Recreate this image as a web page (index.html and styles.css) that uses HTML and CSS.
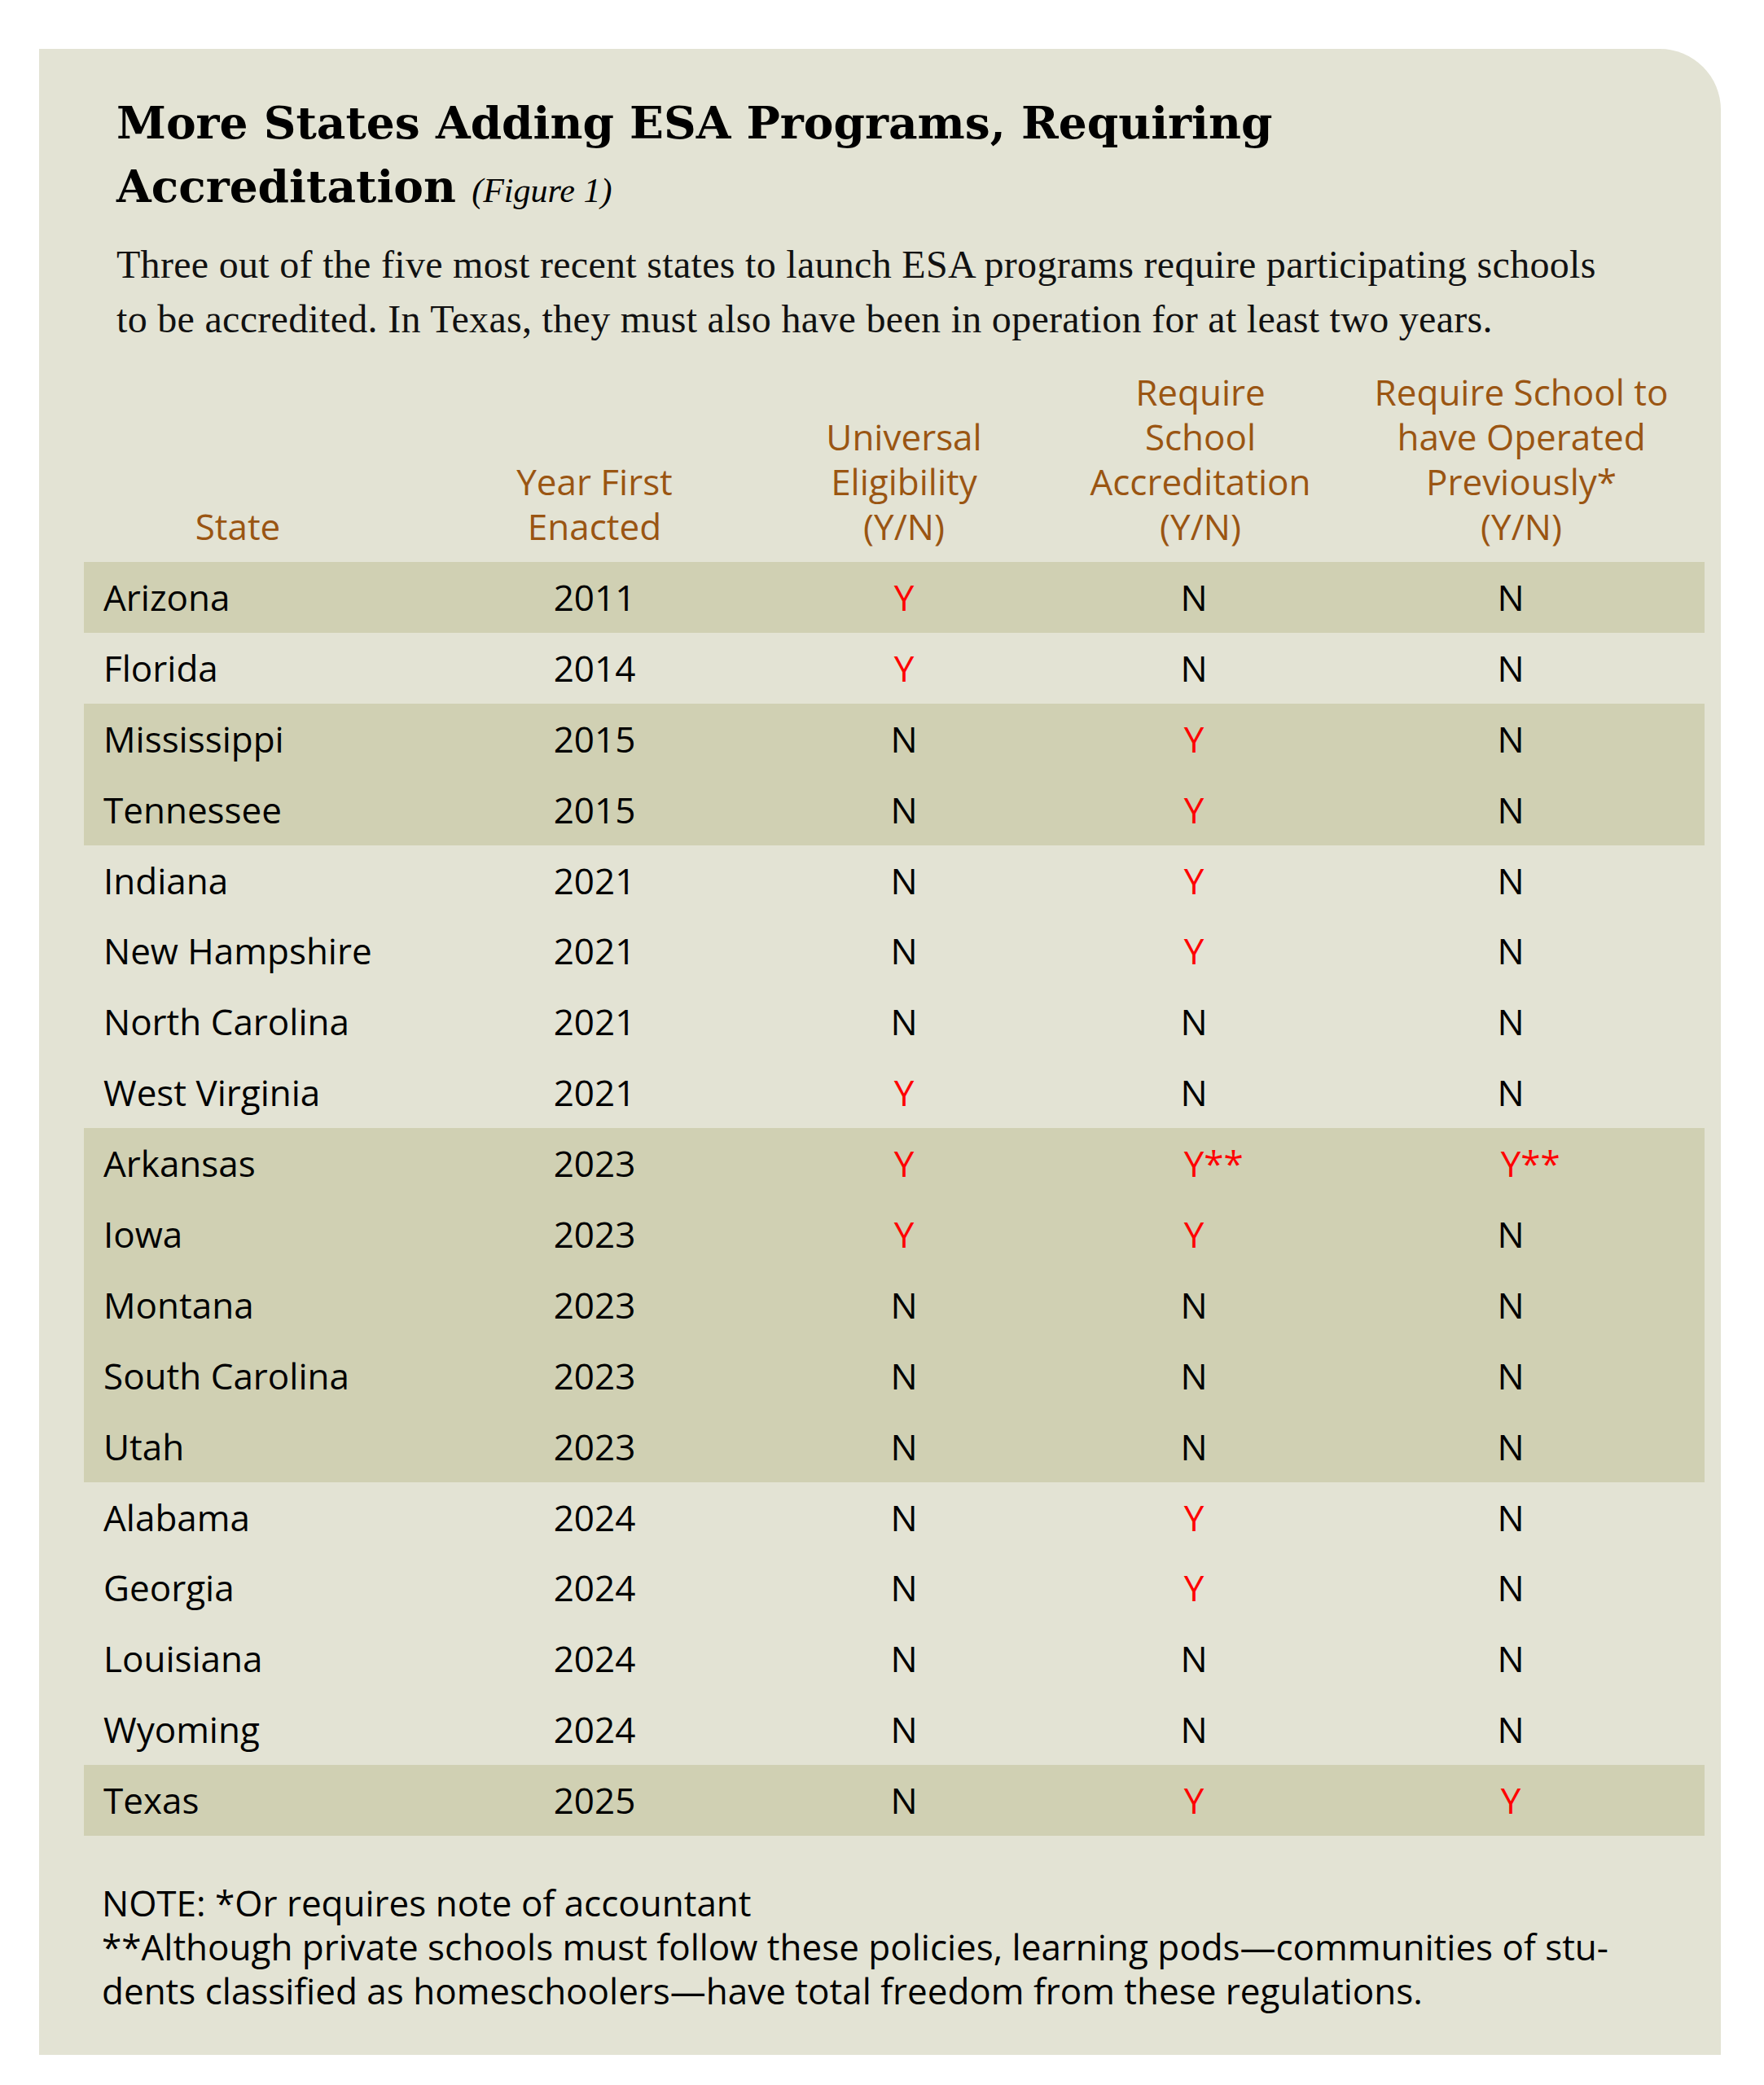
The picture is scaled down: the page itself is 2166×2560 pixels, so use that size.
FILE: index.html
```html
<!DOCTYPE html>
<html lang="en">
<head>
<meta charset="utf-8">
<title>More States Adding ESA Programs, Requiring Accreditation</title>
<link rel="stylesheet" href="styles.css">
</head>
<body>
<section class="panel">
  <h1 class="title">More States Adding ESA Programs, Requiring<br>Accreditation <span class="fig">(Figure 1)</span></h1>
  <p class="lede">Three out of the five most recent states to launch ESA programs require participating schools<br>to be accredited. In Texas, they must also have been in operation for at least two years.</p>

  <div class="table">
    <div class="head">
      <div class="hc c1"><span>State</span></div>
      <div class="hc c2"><span>Year First<br>Enacted</span></div>
      <div class="hc c3"><span>Universal<br>Eligibility<br>(Y/N)</span></div>
      <div class="hc c4"><span>Require<br>School<br>Accreditation<br>(Y/N)</span></div>
      <div class="hc c5"><span>Require School to<br>have Operated<br>Previously*<br>(Y/N)</span></div>
    </div>

    <div class="row shade"><div class="st">Arizona</div><div class="yr">2011</div><div class="v y">Y</div><div class="v">N</div><div class="v">N</div></div>
    <div class="row"><div class="st">Florida</div><div class="yr">2014</div><div class="v y">Y</div><div class="v">N</div><div class="v">N</div></div>
    <div class="row shade"><div class="st">Mississippi</div><div class="yr">2015</div><div class="v">N</div><div class="v y">Y</div><div class="v">N</div></div>
    <div class="row shade"><div class="st">Tennessee</div><div class="yr">2015</div><div class="v">N</div><div class="v y">Y</div><div class="v">N</div></div>
    <div class="row"><div class="st">Indiana</div><div class="yr">2021</div><div class="v">N</div><div class="v y">Y</div><div class="v">N</div></div>
    <div class="row"><div class="st">New Hampshire</div><div class="yr">2021</div><div class="v">N</div><div class="v y">Y</div><div class="v">N</div></div>
    <div class="row"><div class="st">North Carolina</div><div class="yr">2021</div><div class="v">N</div><div class="v">N</div><div class="v">N</div></div>
    <div class="row"><div class="st">West Virginia</div><div class="yr">2021</div><div class="v y">Y</div><div class="v">N</div><div class="v">N</div></div>
    <div class="row shade"><div class="st">Arkansas</div><div class="yr">2023</div><div class="v y">Y</div><div class="v y">Y<span class="hang">**</span></div><div class="v y">Y<span class="hang">**</span></div></div>
    <div class="row shade"><div class="st">Iowa</div><div class="yr">2023</div><div class="v y">Y</div><div class="v y">Y</div><div class="v">N</div></div>
    <div class="row shade"><div class="st">Montana</div><div class="yr">2023</div><div class="v">N</div><div class="v">N</div><div class="v">N</div></div>
    <div class="row shade"><div class="st">South Carolina</div><div class="yr">2023</div><div class="v">N</div><div class="v">N</div><div class="v">N</div></div>
    <div class="row shade"><div class="st">Utah</div><div class="yr">2023</div><div class="v">N</div><div class="v">N</div><div class="v">N</div></div>
    <div class="row"><div class="st">Alabama</div><div class="yr">2024</div><div class="v">N</div><div class="v y">Y</div><div class="v">N</div></div>
    <div class="row"><div class="st">Georgia</div><div class="yr">2024</div><div class="v">N</div><div class="v y">Y</div><div class="v">N</div></div>
    <div class="row"><div class="st">Louisiana</div><div class="yr">2024</div><div class="v">N</div><div class="v">N</div><div class="v">N</div></div>
    <div class="row"><div class="st">Wyoming</div><div class="yr">2024</div><div class="v">N</div><div class="v">N</div><div class="v">N</div></div>
    <div class="row shade"><div class="st">Texas</div><div class="yr">2025</div><div class="v">N</div><div class="v y">Y</div><div class="v y">Y</div></div>
  </div>

  <p class="note">NOTE: *Or requires note of accountant<br>**Although private schools must follow these policies, learning pods—communities of stu-<br>dents classified as homeschoolers—have total freedom from these regulations.</p>
</section>
</body>
</html>
```

FILE: styles.css
```css
html, body {
  margin: 0;
  padding: 0;
  background: #ffffff;
}

.panel {
  box-sizing: border-box;
  margin: 60px 0 0 48px;
  width: 2065px;
  height: 2463px;
  background: #e3e3d4;
  border-top-right-radius: 75px;
  padding: 52px 20px 0 55px;
}

.title {
  margin: 0 0 0 40px;
  font-family: "DejaVu Serif", serif;
  font-weight: 700;
  font-size: 55px;
  line-height: 78px;
  letter-spacing: 0;
  color: #000;
}

.fig {
  font-family: "Liberation Serif", serif;
  font-style: italic;
  font-weight: 400;
  font-size: 42px;
  letter-spacing: 0;
}

.lede {
  margin: 18px 0 0 40px;
  font-family: "Liberation Serif", serif;
  font-size: 48px;
  letter-spacing: 0.3px;
  line-height: 67px;
  color: #111;
}

.table {
  margin-top: 29px;
  width: 1990px;
  font-family: "Open Sans", sans-serif;
  font-size: 44px;
}

.head,
.row {
  display: grid;
  grid-template-columns: 378px 498px 262px 450px 328px 74px;
}

.head {
  align-items: end;
  margin-bottom: 16px;
  color: #9a5512;
  font-weight: 500;
  line-height: 55px;
}

.hc {
  display: flex;
  flex-direction: column;
  align-items: center;
  justify-content: flex-end;
  white-space: nowrap;
  text-align: center;
}

.hc.c4 { padding-left: 16px; }
.hc.c5 { padding-left: 26px; }

.row {
  height: 86.9px;
  line-height: 86.9px;
  color: #000;
  font-weight: 500;
}

.row.shade {
  background: #d0d0b3;
}

.st {
  padding-left: 24px;
  white-space: nowrap;
}

.yr,
.v {
  text-align: center;
  white-space: nowrap;
}

.v.y {
  color: #ff0000;
}

.hang {
  display: inline-block;
  width: 0;
  overflow: visible;
}

.note {
  margin: 55px 0 0 22px;
  font-family: "Open Sans", sans-serif;
  font-size: 44px;
  font-weight: 500;
  line-height: 54px;
  color: #000;
}
```
